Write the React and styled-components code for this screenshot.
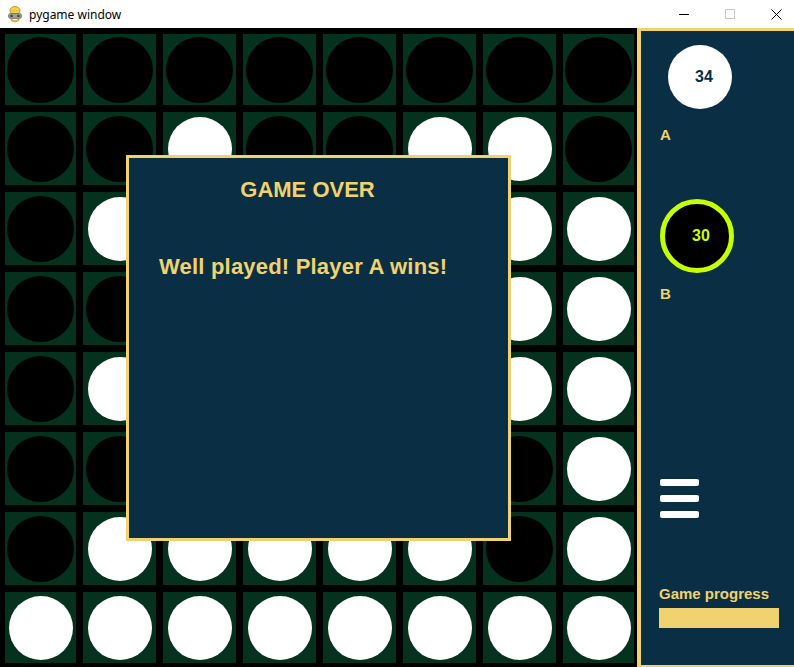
import React from "react";
import styled, { createGlobalStyle } from "styled-components";

const GlobalStyle = createGlobalStyle`
  html, body { margin: 0; padding: 0; overflow: hidden; background: #000; }
  * { box-sizing: border-box; }
`;

const YELLOW = "#f0d36e";
const NAVY = "#0a2f45";
const GREEN = "#05321f";
const LIME = "#c6ff00";

const Window = styled.div`
  width: 794px;
  height: 667px;
  display: flex;
  flex-direction: column;
  overflow: hidden;
`;

const TitleBar = styled.div`
  height: 28px;
  background: #fff;
  display: flex;
  align-items: center;
  justify-content: space-between;
  flex-shrink: 0;
`;

const TitleLeft = styled.div`
  display: flex;
  align-items: center;
  padding-left: 7px;
  gap: 6px;
  font-family: "Noto Sans", "Open Sans", sans-serif;
  font-size: 12px;
  color: #000;
`;

const Controls = styled.div`
  display: flex;
  height: 28px;
  margin-right: -5px;
`;

const CtrlButton = styled.div`
  width: 46px;
  height: 28px;
  display: flex;
  align-items: center;
  justify-content: center;
`;

const Content = styled.div`
  flex: 1;
  display: flex;
  min-height: 0;
`;

const BoardArea = styled.div`
  position: relative;
  width: 637px;
  flex-shrink: 0;
  background: #000;
  padding: 6px 3px 4px 5px;
  display: grid;
  grid-template-columns: 71px repeat(6, 73px) 71px;
  grid-template-rows: 71px repeat(6, 73px) 71px;
  gap: 7px;
`;

const Cell = styled.div`
  background: ${GREEN};
  display: flex;
  align-items: center;
  justify-content: center;
`;

const Piece = styled.div`
  width: ${(p) => (p.$white ? 64 : 67)}px;
  height: ${(p) => (p.$white ? 64 : 66)}px;
  border-radius: 50%;
  background: ${(p) => (p.$white ? "#fff" : "#000")};
`;

const Modal = styled.div`
  position: absolute;
  left: 126px;
  top: 127px;
  width: 385px;
  height: 386px;
  background: ${NAVY};
  border: 3px solid ${YELLOW};
  padding: 19px 30px 0 30px;
  display: flex;
  flex-direction: column;
  font-family: "Liberation Sans", Arial, sans-serif;
  font-weight: bold;
  font-size: 22px;
  line-height: 25px;
  color: ${YELLOW};
`;

const ModalTitle = styled.div`
  text-align: center;
  margin-left: -22px;
`;

const ModalMessage = styled.div`
  margin-top: 52px;
  letter-spacing: 0.2px;
`;

const SidePanel = styled.div`
  flex: 1;
  background: ${NAVY};
  border-top: 3px solid ${YELLOW};
  border-left: 4px solid ${YELLOW};
  border-bottom: 2px solid ${YELLOW};
  padding: 14px 0 0 18px;
  display: flex;
  flex-direction: column;
  align-items: flex-start;
  font-family: "Liberation Sans", Arial, sans-serif;
  font-weight: bold;
`;

const ScoreDisc = styled.div`
  width: ${(p) => p.$size}px;
  height: ${(p) => p.$size}px;
  margin-left: ${(p) => p.$offset}px;
  margin-top: ${(p) => p.$gap || 0}px;
  border-radius: 50%;
  background: ${(p) => (p.$active ? "#000" : "#fff")};
  border: ${(p) => (p.$active ? `5px solid ${LIME}` : "none")};
  color: ${(p) => (p.$active ? LIME : NAVY)};
  display: flex;
  align-items: center;
  justify-content: center;
  padding-left: 8px;
  font-size: 16px;
`;

const PlayerLabel = styled.div`
  font-size: 15px;
  line-height: 17px;
  color: ${YELLOW};
  margin-top: ${(p) => p.$gap}px;
  margin-left: 1px;
`;

const Menu = styled.div`
  margin-top: 177px;
  margin-left: 1px;
  display: flex;
  flex-direction: column;
  gap: 9px;
`;

const MenuBar = styled.div`
  width: 39px;
  height: 7px;
  border-radius: 2px;
  background: #fff;
`;

const ProgressLabel = styled.div`
  margin-top: 67px;
  font-size: 15px;
  line-height: 17px;
  color: ${YELLOW};
`;

const ProgressTrack = styled.div`
  margin-top: 6px;
  width: 120px;
  height: 20px;
  background: ${YELLOW};
`;

const BOARD = [
  "BBBBBBBB",
  "BBWBBWWB",
  "BWWBWBWW",
  "BBBWBWWW",
  "BWWBWBWW",
  "BBBWBWBW",
  "BWWWWWBW",
  "WWWWWWWW",
];

function PygameIcon() {
  return (
    <svg width="16" height="17" viewBox="0 0 16 17">
      <ellipse cx="8" cy="4.5" rx="5" ry="4" fill="#f2d23c" stroke="#b08a10" strokeWidth="0.8" />
      <circle cx="6" cy="3.8" r="1" fill="#fff" />
      <circle cx="10" cy="3.8" r="1" fill="#fff" />
      <circle cx="6" cy="3.9" r="0.5" fill="#000" />
      <circle cx="10" cy="3.9" r="0.5" fill="#000" />
      <rect x="1.5" y="7.5" width="13" height="5" rx="2" fill="#9a9a9a" stroke="#555" strokeWidth="0.6" />
      <circle cx="4.5" cy="10" r="1.3" fill="#444" />
      <circle cx="11.5" cy="10" r="1.3" fill="#444" />
      <path d="M4 12.5 Q8 17 12 12.5 L12 14.5 Q8 17.5 4 14.5 Z" fill="#f2d23c" stroke="#b08a10" strokeWidth="0.6" />
    </svg>
  );
}

export default function App() {
  return (
    <>
      <GlobalStyle />
      <Window>
        <TitleBar>
          <TitleLeft>
            <PygameIcon />
            <span>pygame window</span>
          </TitleLeft>
          <Controls>
            <CtrlButton>
              <svg width="10" height="10" viewBox="0 0 10 10">
                <line x1="0" y1="5.5" x2="10" y2="5.5" stroke="#000" strokeWidth="1" />
              </svg>
            </CtrlButton>
            <CtrlButton>
              <svg width="10" height="10" viewBox="0 0 10 10">
                <rect x="0.5" y="0.5" width="9" height="9" fill="none" stroke="#c8c8c8" strokeWidth="1" />
              </svg>
            </CtrlButton>
            <CtrlButton>
              <svg width="11" height="11" viewBox="0 0 11 11">
                <path d="M0.5 0.5 L10.5 10.5 M10.5 0.5 L0.5 10.5" stroke="#000" strokeWidth="1" />
              </svg>
            </CtrlButton>
          </Controls>
        </TitleBar>
        <Content>
          <BoardArea>
            {BOARD.map((row, r) =>
              row.split("").map((c, i) => (
                <Cell key={`${r}-${i}`}>
                  <Piece $white={c === "W"} />
                </Cell>
              ))
            )}
            <Modal>
              <ModalTitle>GAME OVER</ModalTitle>
              <ModalMessage>Well played! Player A wins!</ModalMessage>
            </Modal>
          </BoardArea>
          <SidePanel>
            <ScoreDisc $size={64} $offset={9}>34</ScoreDisc>
            <PlayerLabel $gap={17}>A</PlayerLabel>
            <ScoreDisc $size={74} $offset={1} $gap={56} $active>30</ScoreDisc>
            <PlayerLabel $gap={12}>B</PlayerLabel>
            <Menu>
              <MenuBar />
              <MenuBar />
              <MenuBar />
            </Menu>
            <ProgressLabel>Game progress</ProgressLabel>
            <ProgressTrack />
          </SidePanel>
        </Content>
      </Window>
    </>
  );
}
